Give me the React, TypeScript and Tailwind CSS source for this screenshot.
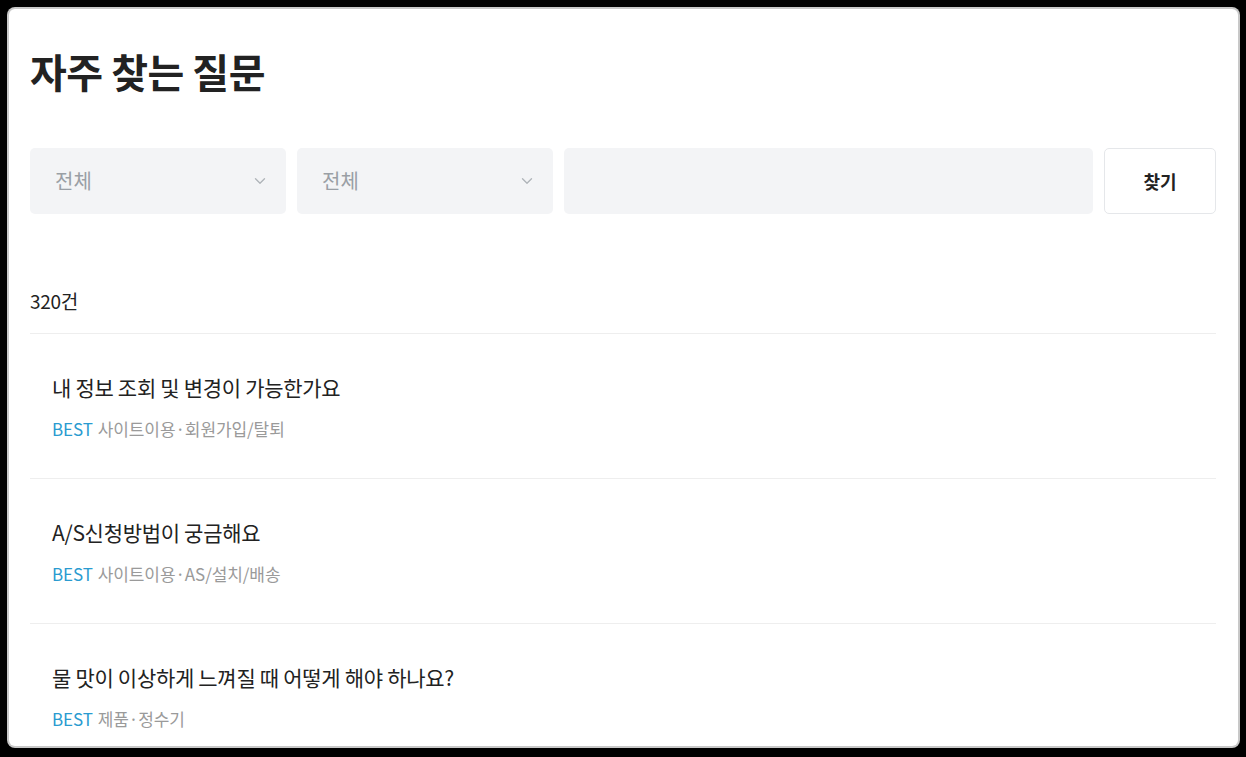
import { ChevronDown } from 'lucide-react';

const FAQS = [
  { q: '내 정보 조회 및 변경이 가능한가요', cat: '사이트이용·회원가입/탈퇴' },
  { q: 'A/S신청방법이 궁금해요', cat: '사이트이용·AS/설치/배송' },
  { q: '물 맛이 이상하게 느껴질 때 어떻게 해야 하나요?', cat: '제품·정수기' },
];

function Select() {
  return (
    <div className="flex h-[66px] w-[256px] items-center justify-between rounded-[5px] bg-[#f3f4f6] pl-[25px] pr-[17px]">
      <span className="text-[20px] text-[#9a9fa5]">전체</span>
      <ChevronDown className="h-[18px] w-[18px] text-[#b0b5ba]" strokeWidth={1.8} />
    </div>
  );
}

export default function App() {
  return (
    <div
      className="h-[757px] w-[1246px] overflow-hidden bg-black pl-[9px] pt-[9px]"
      style={{ fontFamily: '"Noto Sans CJK KR", "Noto Sans", sans-serif' }}
    >
      <div className="h-[737px] w-[1229px] overflow-hidden rounded-[6px] bg-white pl-[21px] pr-[22px] pt-[37px] shadow-[0_0_0_2px_#c8c8c8]">
        {/* Header */}
        <h1 className="text-[40px] font-bold leading-[50px] tracking-[-0.5px] text-[#222]">자주 찾는 질문</h1>

        {/* Filters */}
        <div className="mt-[52px] flex gap-[11px]">
          <Select />
          <Select />
          <div className="h-[66px] flex-1 rounded-[5px] bg-[#f3f4f6]" />
          <button className="h-[66px] w-[112px] rounded-[5px] border border-[#e5e7ea] bg-white text-[18px] font-bold text-[#222]">
            찾기
          </button>
        </div>

        {/* Count */}
        <div className="mt-[74px] border-b border-[#eeeeee] pb-[19px] text-[19px] leading-[26px] tracking-[-0.3px] text-[#222]">
          320건
        </div>

        {/* List */}
        {FAQS.map((f) => (
          <div key={f.q} className="border-b border-[#eeeeee] pb-[37px] pl-[22px] pt-[39px]">
            <div className="text-[21px] leading-[28px] tracking-[-0.3px] text-[#222]">{f.q}</div>
            <div className="mt-[16px] text-[17px] leading-[24px] tracking-[-0.1px]">
              <span className="text-[#2a9bd0]">BEST</span>
              <span className="ml-[5px] text-[#9a9a9a]">{f.cat}</span>
            </div>
          </div>
        ))}
      </div>
    </div>
  );
}
